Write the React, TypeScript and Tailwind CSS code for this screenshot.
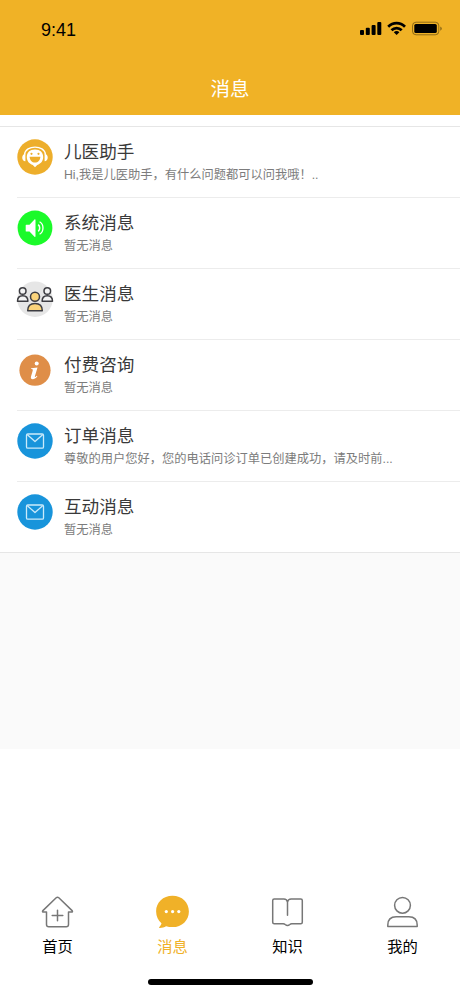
import type { ReactNode } from 'react';

type Message = {
  title: string;
  text: string;
  icon: ReactNode;
};

function AssistantIcon() {
  return (
    <svg viewBox="0 0 36 36" className="w-9 h-9">
      <circle cx="18" cy="18" r="17.7" fill="#edae2b" />
      <path d="M7.600 15.500C8.400 5.600 27.600 5.600 28.400 15.500" fill="none" stroke="#fff" strokeWidth="1.400" />
      <path
        d="M18 10.600c-5.200 0-8.200 3-8.200 7.500 0 4.200 2.600 6.900 6 7.900l2.200 2.200 2.200-2.200c3.400-1 6-3.700 6-7.900 0-4.500-3-7.500-8.200-7.500z"
        fill="#fff"
      />
      <path d="M8.400 14.700c-4.200.3-4.200 7.300 0 7.600zM27.600 14.700c4.200.3 4.200 7.300 0 7.600z" fill="#fff" />
      <path d="M12.600 17.700h10.800c-.3 3.700-2.400 5.900-5.400 5.900s-5.100-2.200-5.400-5.900z" fill="#edae2b" />
      <circle cx="14.500" cy="14.800" r="1.100" fill="#edae2b" />
      <circle cx="21.500" cy="14.800" r="1.100" fill="#edae2b" />
    </svg>
  );
}

function SpeakerIcon() {
  return (
    <svg viewBox="0 0 36 36" className="w-9 h-9">
      <circle cx="18" cy="18" r="17.400" fill="#1bfa2a" />
      <path d="M9.300 14.700h3.200l5-5.300c.5-.4 1-.2 1 .5v16.400c0 .7-.5.900-1 .5l-5-5.300H9.300c-.4 0-.6-.3-.6-.6v-5.600c0-.4.2-.6.600-.6z" fill="#fff" />
      <path d="M21.200 14.600c2 1.600 2 5.200 0 6.800" fill="none" stroke="#fff" strokeWidth="1.500" />
      <path d="M22.600 11.800c4.500 2.500 4.500 9.900 0 12.400" fill="none" stroke="#fff" strokeWidth="1.300" />
    </svg>
  );
}

function DoctorsIcon() {
  return (
    <svg viewBox="0 0 36 36" className="w-9 h-9 overflow-visible">
      <circle cx="18" cy="18.200" r="17.700" fill="#e6e6e6" />
      <g stroke="#3d3d42" strokeWidth="1.500" strokeLinejoin="round">
        <g fill="#f4f4f4">
          <circle cx="5.700" cy="10" r="3.300" />
          <path d="M.5 20.300c0-3.700 2-5.500 5.200-5.500s5.200 1.800 5.200 5.500z" />
          <circle cx="30.300" cy="10" r="3.300" />
          <path d="M25.100 20.300c0-3.700 2-5.500 5.200-5.500s5.200 1.800 5.200 5.500z" />
        </g>
        <g fill="#fbd47b">
          <circle cx="18" cy="15.700" r="4.500" />
          <path d="M10.700 29.700c0-4.800 2.800-7.200 7.300-7.200s7.300 2.400 7.300 7.200z" />
        </g>
      </g>
    </svg>
  );
}

function InfoIcon() {
  return (
    <svg viewBox="0 0 36 36" className="w-9 h-9">
      <circle cx="18" cy="18.200" r="15.600" fill="#df8e48" />
      <circle cx="19.700" cy="11.500" r="2" fill="#fff" />
      <path
        d="M14.200 16.300l6.300-.9-2.600 8.800c-.3 1.100.4 1 1.900-.5l.6.500c-1.700 2.200-3.200 3-4.600 3-1.700 0-2.300-1-1.800-2.800l1.700-5.700c.3-1.200 0-1.500-1.700-1.600z"
        fill="#fff"
      />
    </svg>
  );
}

function MailIcon() {
  return (
    <svg viewBox="0 0 36 36" className="w-9 h-9">
      <circle cx="18" cy="18" r="17.700" fill="#1894db" />
      <g fill="none" stroke="#cbeafa" strokeWidth="1.300" strokeLinejoin="round">
        <rect x="9.500" y="11" width="17" height="14.200" rx="1.300" />
        <path d="M10.400 11.700l7.600 6.900 7.600-6.900" />
      </g>
    </svg>
  );
}

const messages: Message[] = [
  { title: '儿医助手', text: 'Hi,我是儿医助手，有什么问题都可以问我哦！..', icon: <AssistantIcon /> },
  { title: '系统消息', text: '暂无消息', icon: <SpeakerIcon /> },
  { title: '医生消息', text: '暂无消息', icon: <DoctorsIcon /> },
  { title: '付费咨询', text: '暂无消息', icon: <InfoIcon /> },
  { title: '订单消息', text: '尊敬的用户您好，您的电话问诊订单已创建成功，请及时前...', icon: <MailIcon /> },
  { title: '互动消息', text: '暂无消息', icon: <MailIcon /> },
];

const tabs = [
  {
    label: '首页',
    icon: (
      <svg viewBox="0 0 34 34" className="w-[35px] h-[34px]" fill="none" stroke="#777" strokeWidth="1.500" strokeLinejoin="round" strokeLinecap="round">
        <path d="M15.700 2.800 2.400 15.600c-.7.800-.4 1.500.6 1.500h3v12.400c0 1.500.8 2.300 2.300 2.300h17.400c1.500 0 2.300-.8 2.300-2.300V17.100h3c1 0 1.300-.7.600-1.500L18.300 2.800c-.9-.8-1.700-.8-2.600 0z" />
        <path d="M17 15.300v10.500M11.700 20.600h10.600" />
      </svg>
    ),
  },
  {
    label: '消息',
    active: true,
    icon: (
      <svg viewBox="0 0 34 34" className="w-[35px] h-[34px]">
        <path d="M17 .8C7.500.8.600 7.600.600 16.300c0 5.200 2.200 9.300 5.400 12-.3 1.500-1.100 2.700-2.100 3.600-.5.500-.3 1 .4 1 2.400 0 4.500-.5 6.300-1.700 2 .600 4.100.9 6.400.9 9.500 0 16.400-6.900 16.400-15.700S26.500.8 17 .8z" fill="#f0b128" />
        <g fill="#fff">
          <circle cx="10.800" cy="16.600" r="1.600" />
          <circle cx="17.100" cy="16.600" r="1.600" />
          <circle cx="23.300" cy="16.600" r="1.600" />
        </g>
      </svg>
    ),
  },
  {
    label: '知识',
    icon: (
      <svg viewBox="0 0 34 34" className="w-[35px] h-[34px]" fill="none" stroke="#777" strokeWidth="1.500" strokeLinejoin="round" strokeLinecap="round">
        <path d="M17 7c-.4-2-1.600-3-3.600-3H3.700c-1 0-1.500.5-1.500 1.500v21.700c0 1 .5 1.500 1.500 1.500h9c.9 0 1.500.3 2 .8 1.300 1.200 3.300 1.200 4.600 0 .5-.5 1.100-.8 2-.8h9c1 0 1.500-.5 1.500-1.500V5.500c0-1-.5-1.500-1.500-1.500h-9.700c-2 0-3.200 1-3.600 3zv13.300" />
      </svg>
    ),
  },
  {
    label: '我的',
    icon: (
      <svg viewBox="0 0 34 34" className="w-[35px] h-[34px]" fill="none" stroke="#777" strokeWidth="1.500" strokeLinejoin="round">
        <circle cx="17" cy="10.300" r="7.900" />
        <path d="M2.300 31.600V30c0-5.200 3.200-8.300 8.400-8.300h12.600c5.200 0 8.400 3.100 8.400 8.300v1.600z" />
      </svg>
    ),
  },
];

function StatusIcons() {
  return (
    <svg viewBox="0 0 84 18" className="w-[84px] h-[18px]">
      <rect x="0" y="10" width="4" height="5" rx="1" />
      <rect x="5.800" y="7.700" width="4" height="7.300" rx="1" />
      <rect x="11.600" y="5" width="4" height="10" rx="1" />
      <rect x="17.300" y="2" width="4" height="13" rx="1" />
      <g fill="none" stroke="#000" strokeWidth="2.700">
        <path d="M28.200 6.800c4.800-4.900 12-4.900 16.800 0" />
        <path d="M31.500 10.200c2.900-2.900 7.300-2.900 10.200 0" />
      </g>
      <path d="M33.800 12.200c1.700-1.500 3.900-1.500 5.600 0l-2.800 2.900z" />
      <rect x="52.500" y="2.200" width="26.300" height="12.600" rx="3.500" fill="none" stroke="#000" strokeOpacity=".4" />
      <rect x="54.300" y="4" width="22.500" height="9" rx="1.600" />
      <path d="M80.300 6.500c2 .8 2 3.400 0 4.200z" fillOpacity=".45" />
    </svg>
  );
}

export default function App() {
  return (
    <div className="w-[460px] h-[996px] flex flex-col overflow-hidden bg-white font-['Liberation_Sans','Noto_Sans_CJK_SC',sans-serif]">
      <header className="h-[115px] shrink-0 bg-[#f0b226] flex flex-col">
        <div className="h-16 shrink-0 flex justify-between items-start pl-[41px] pr-4 pt-5">
          <span className="text-[18px] leading-5 text-black">9:41</span>
          <StatusIcons />
        </div>
        <h1 className="text-center text-[19.500px] leading-[51px] text-white">消息</h1>
      </header>

      <main className="h-[634px] shrink-0 bg-[#fafafa]">
        <div className="h-[11px] bg-white" />
        <ul className="h-[427px] bg-white border-y border-[#e6e6e6]">
          {messages.map((message, i) => (
            <li key={message.title} className={`flex pl-[17px] ${i > 0 ? 'h-[71px]' : 'h-[70px]'}`}>
              <div className={`w-[47px] shrink-0 ${i > 0 ? 'pt-[13px]' : 'pt-3'}`}>{message.icon}</div>
              <div className={`flex-1 pt-3 ${i > 0 ? '-ml-[47px] pl-[47px] border-t border-[#ececec]' : ''}`}>
                <h2 className="text-[17.600px] leading-[26px] text-[#3a3a3a]">{message.title}</h2>
                <p className="text-[12.260px] leading-5 text-[#7c7c7c] whitespace-nowrap">{message.text}</p>
              </div>
            </li>
          ))}
        </ul>
      </main>

      <nav className="mt-auto h-[101px] shrink-0 grid grid-cols-4">
        {tabs.map(tab => (
          <button key={tab.label} className="flex flex-col items-center">
            {tab.icon}
            <span className={`mt-2 text-[15.300px] leading-5 ${tab.active ? 'text-[#f0b128]' : 'text-black'}`}>
              {tab.label}
            </span>
          </button>
        ))}
      </nav>
      <div className="h-[17px] -mt-[17px] shrink-0 flex justify-center">
        <div className="w-[165px] h-1.5 rounded-full bg-black" />
      </div>
    </div>
  );
}
